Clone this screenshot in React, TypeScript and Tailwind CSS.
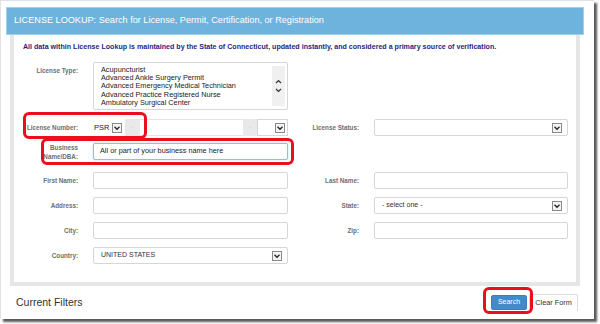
import React from "react";

const font = { fontFamily: '"Liberation Sans", Arial, sans-serif' };

const Arrow = () => (
  <span className="flex items-center justify-center w-[10px] h-[10px] border border-[#8a8a8a] bg-[#f4f4f4]">
    <svg width="8" height="8" viewBox="0 0 8 8">
      <path d="M1.5 2.8 L4 5.3 L6.5 2.8" fill="none" stroke="#222" strokeWidth="1.3" />
    </svg>
  </span>
);

const Select = ({ text, w }: { text?: string; w: string }) => (
  <div className={`${w} h-[17px] flex items-center justify-between border border-[#d6d6d6] rounded-[2px] bg-white pl-[7px] pr-[5px]`}>
    <span className="text-[7px] text-[#333]">{text}</span>
    <Arrow />
  </div>
);

const Input = ({ w }: { w: string }) => (
  <div className={`${w} h-[17px] border border-[#d6d6d6] rounded-[2px] bg-white`} />
);

const Label = ({ children, w }: { children: React.ReactNode; w: string }) => (
  <div className={`${w} text-right text-[6.3px] font-bold text-[#6e6e6e] leading-[9px]`}>{children}</div>
);

const Row = ({
  left,
  leftField,
  right,
  rightField,
  cls,
}: {
  left: React.ReactNode;
  leftField: React.ReactNode;
  right?: React.ReactNode;
  rightField?: React.ReactNode;
  cls: string;
}) => (
  <div className={`flex items-center h-[17px] ${cls}`}>
    <Label w="w-[64px]">{left}</Label>
    <div className="ml-[15px] w-[195px]">{leftField}</div>
    {right && <Label w="w-[71px]">{right}</Label>}
    {rightField && <div className="ml-[15px] w-[194px]">{rightField}</div>}
  </div>
);

export default function App() {
  const types = [
    "Acupuncturist",
    "Advanced Ankle Surgery Permit",
    "Advanced Emergency Medical Technician",
    "Advanced Practice Registered Nurse",
    "Ambulatory Surgical Center",
  ];
  return (
    <div className="w-[600px] h-[324px] bg-white" style={font}>
      <div className="relative w-[594px] h-[319px] bg-white border-t border-l border-[#e2e2e2] shadow-[3px_3px_2px_rgba(0,0,0,0.65)]">
        <div className="ml-[5px] mt-[6px] w-[578px] h-[28px] bg-[#6db3dd] border border-[#9fd0ee] flex items-center pl-[7px] text-white text-[9.15px]">
          LICENSE LOOKUP: Search for License, Permit, Certification, or Registration
        </div>
        <div className="ml-[9px] w-[570px] h-[251px] border-x-4 border-b-4 border-[#e6e6e6] flex flex-col">
          <div className="mt-[8px] ml-[9px] h-[8px] leading-[8px] text-[7.1px] font-bold text-[#1f1f80] whitespace-nowrap">
            All data within License Lookup is maintained by the State of Connecticut, updated instantly, and considered a primary source of verification.
          </div>
          <div className="flex mt-[11px] h-[48px]">
            <div className="w-[64px] pt-[4px]">
              <Label w="w-[64px]">License Type:</Label>
            </div>
            <div className="ml-[15px] w-[195px] h-[48px] border border-[#d6d6d6] rounded-[2px] flex">
              <div className="flex-1 pl-[7px] pt-[3px] text-[7.3px] leading-[8.2px] text-[#222]">
                {types.map((t) => (
                  <div key={t}>{t}</div>
                ))}
              </div>
              <div className="w-[13px] my-[3px] mr-[2px] bg-[#f0f0f0] flex flex-col items-center justify-center gap-[4px]">
                <svg width="7" height="5" viewBox="0 0 7 5">
                  <path d="M1 4 L3.5 1.5 L6 4" fill="none" stroke="#333" strokeWidth="1.2" />
                </svg>
                <svg width="7" height="5" viewBox="0 0 7 5">
                  <path d="M1 1 L3.5 3.5 L6 1" fill="none" stroke="#333" strokeWidth="1.2" />
                </svg>
              </div>
            </div>
          </div>
          <Row
            cls="mt-[9px]"
            left="License Number:"
            leftField={
              <div className="flex h-[17px] w-[195px]">
                <div className="w-[31px] h-[17px] flex items-center justify-between bg-white pl-[1px] pr-[2px]">
                  <span className="text-[7.5px] text-[#222]">PSR</span>
                  <Arrow />
                </div>
                <div className="ml-[1px] w-[15px] bg-[#e9e9e9] flex items-center justify-center text-[5px] text-[#bbb]">-</div>
                <div className="w-[103px] border-y border-[#e4e4e4] bg-white" />
                <div className="w-[14px] bg-[#e9e9e9] flex items-center justify-center text-[5px] text-[#bbb]">-</div>
                <div className="w-[31px] border border-[#d6d6d6] flex items-center justify-end pr-[2px] bg-white">
                  <Arrow />
                </div>
              </div>
            }
            right="License Status:"
            rightField={<Select w="w-[194px]" />}
          />
          <Row
            cls="mt-[7px]"
            left={
              <>
                Business
                <br />
                Name/DBA:
              </>
            }
            leftField={
              <div className="w-[195px] h-[17px] border border-[#8cc0e6] rounded-[2px] bg-white shadow-[0_0_2px_#a8d2f0] flex items-center pl-[6px] text-[7.3px] text-[#222]">
                All or part of your business name here
              </div>
            }
          />
          <Row cls="mt-[12px]" left="First Name:" leftField={<Input w="w-[195px]" />} right="Last Name:" rightField={<Input w="w-[194px]" />} />
          <Row
            cls="mt-[8px]"
            left="Address:"
            leftField={<Input w="w-[195px]" />}
            right="State:"
            rightField={<Select w="w-[194px]" text="- select one -" />}
          />
          <Row cls="mt-[8px]" left="City:" leftField={<Input w="w-[195px]" />} right="Zip:" rightField={<Input w="w-[194px]" />} />
          <Row cls="mt-[8px]" left="Country:" leftField={<Select w="w-[195px]" text="UNITED STATES" />} />
        </div>
        <div className="flex items-center h-[33px] pl-[15px] pr-[16px]">
          <span className="text-[10.5px] text-[#333]">Current Filters</span>
          <div className="ml-auto flex items-center gap-[2px]">
            <div className="w-[36px] h-[15px] bg-[#428bca] border border-[#3a7fc0] rounded-[2px] flex items-center justify-center text-white text-[7px]">
              Search
            </div>
            <div className="w-[49px] h-[17px] bg-white border border-[#dcdcdc] border-b-0 rounded-t-[2px] flex items-center justify-center text-[#333] text-[7.3px]">
              Clear Form
            </div>
          </div>
        </div>
        <div className="absolute left-[22px] top-[111px] w-[124px] h-[27px] border-[3px] border-[#e8101a] rounded-[6px]" />
        <div className="absolute left-[40px] top-[137px] w-[253px] h-[27px] border-[3px] border-[#e8101a] rounded-[6px]" />
        <div className="absolute left-[482px] top-[286px] w-[50px] h-[27px] border-[3px] border-[#e8101a] rounded-[6px]" />
      </div>
    </div>
  );
}
